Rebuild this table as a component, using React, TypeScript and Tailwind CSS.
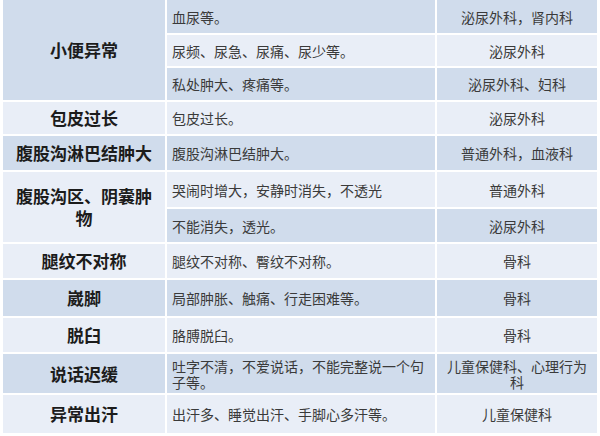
type Sub = { desc: string; dept: string; dark: boolean }
type Group = { name: string; dark: boolean; subs: Sub[] }

const DARK = 'bg-[#d0dcec]'
const LIGHT = 'bg-[#e9eef7]'

const groups: Group[] = [
  {
    name: '小便异常',
    dark: true,
    subs: [
      { desc: '血尿等。', dept: '泌尿外科，肾内科', dark: true },
      { desc: '尿频、尿急、尿痛、尿少等。', dept: '泌尿外科', dark: false },
      { desc: '私处肿大、疼痛等。', dept: '泌尿外科、妇科', dark: true },
    ],
  },
  { name: '包皮过长', dark: false, subs: [{ desc: '包皮过长。', dept: '泌尿外科', dark: false }] },
  {
    name: '腹股沟淋巴结肿大',
    dark: true,
    subs: [{ desc: '腹股沟淋巴结肿大。', dept: '普通外科，血液科', dark: true }],
  },
  {
    name: '腹股沟区、阴囊肿物',
    dark: false,
    subs: [
      { desc: '哭闹时增大，安静时消失，不透光', dept: '普通外科', dark: false },
      { desc: '不能消失，透光。', dept: '泌尿外科', dark: true },
    ],
  },
  { name: '腿纹不对称', dark: false, subs: [{ desc: '腿纹不对称、臀纹不对称。', dept: '骨科', dark: false }] },
  { name: '崴脚', dark: true, subs: [{ desc: '局部肿胀、触痛、行走困难等。', dept: '骨科', dark: true }] },
  { name: '脱臼', dark: false, subs: [{ desc: '胳膊脱臼。', dept: '骨科', dark: false }] },
  {
    name: '说话迟缓',
    dark: true,
    subs: [{ desc: '吐字不清，不爱说话，不能完整说一个句子等。', dept: '儿童保健科、心理行为科', dark: true }],
  },
  { name: '异常出汗', dark: false, subs: [{ desc: '出汗多、睡觉出汗、手脚心多汗等。', dept: '儿童保健科', dark: false }] },
]

export default function App() {
  return (
    <div
      className="h-[436px] w-[600px] overflow-hidden bg-white"
      style={{ fontFamily: '"Noto Sans CJK SC", "Noto Sans", sans-serif' }}
    >
      <div className="ml-[3px] grid w-[594px] grid-cols-[162px_268px_160px] grid-rows-[33px_31px_32px_32px_34px_35px_33px_34px_36px_34px_39px_38px] gap-[2px]">
        {groups.map((g) => (
          <GroupRows key={g.name} group={g} />
        ))}
      </div>
    </div>
  )
}

function GroupRows({ group }: { group: Group }) {
  const span = group.subs.length
  return (
    <>
      <div
        className={`col-start-1 flex items-center justify-center px-[10px] text-center text-[17px] font-bold leading-[22px] text-[#1c1c1c] ${
          group.dark ? DARK : LIGHT
        }`}
        style={{ gridRow: `span ${span}` }}
      >
        {group.name}
      </div>
      {group.subs.map((s, i) => (
        <SubRow key={i} sub={s} />
      ))}
    </>
  )
}

function SubRow({ sub }: { sub: Sub }) {
  const bg = sub.dark ? DARK : LIGHT
  return (
    <>
      <div className={`col-start-2 flex items-center pl-[5px] pr-[4px] text-[14px] leading-[16px] text-[#3a3a3a] ${bg}`}>
        {sub.desc}
      </div>
      <div className={`col-start-3 flex items-center justify-center px-[5px] text-center text-[14px] leading-[16px] text-[#3a3a3a] ${bg}`}>
        {sub.dept}
      </div>
    </>
  )
}
